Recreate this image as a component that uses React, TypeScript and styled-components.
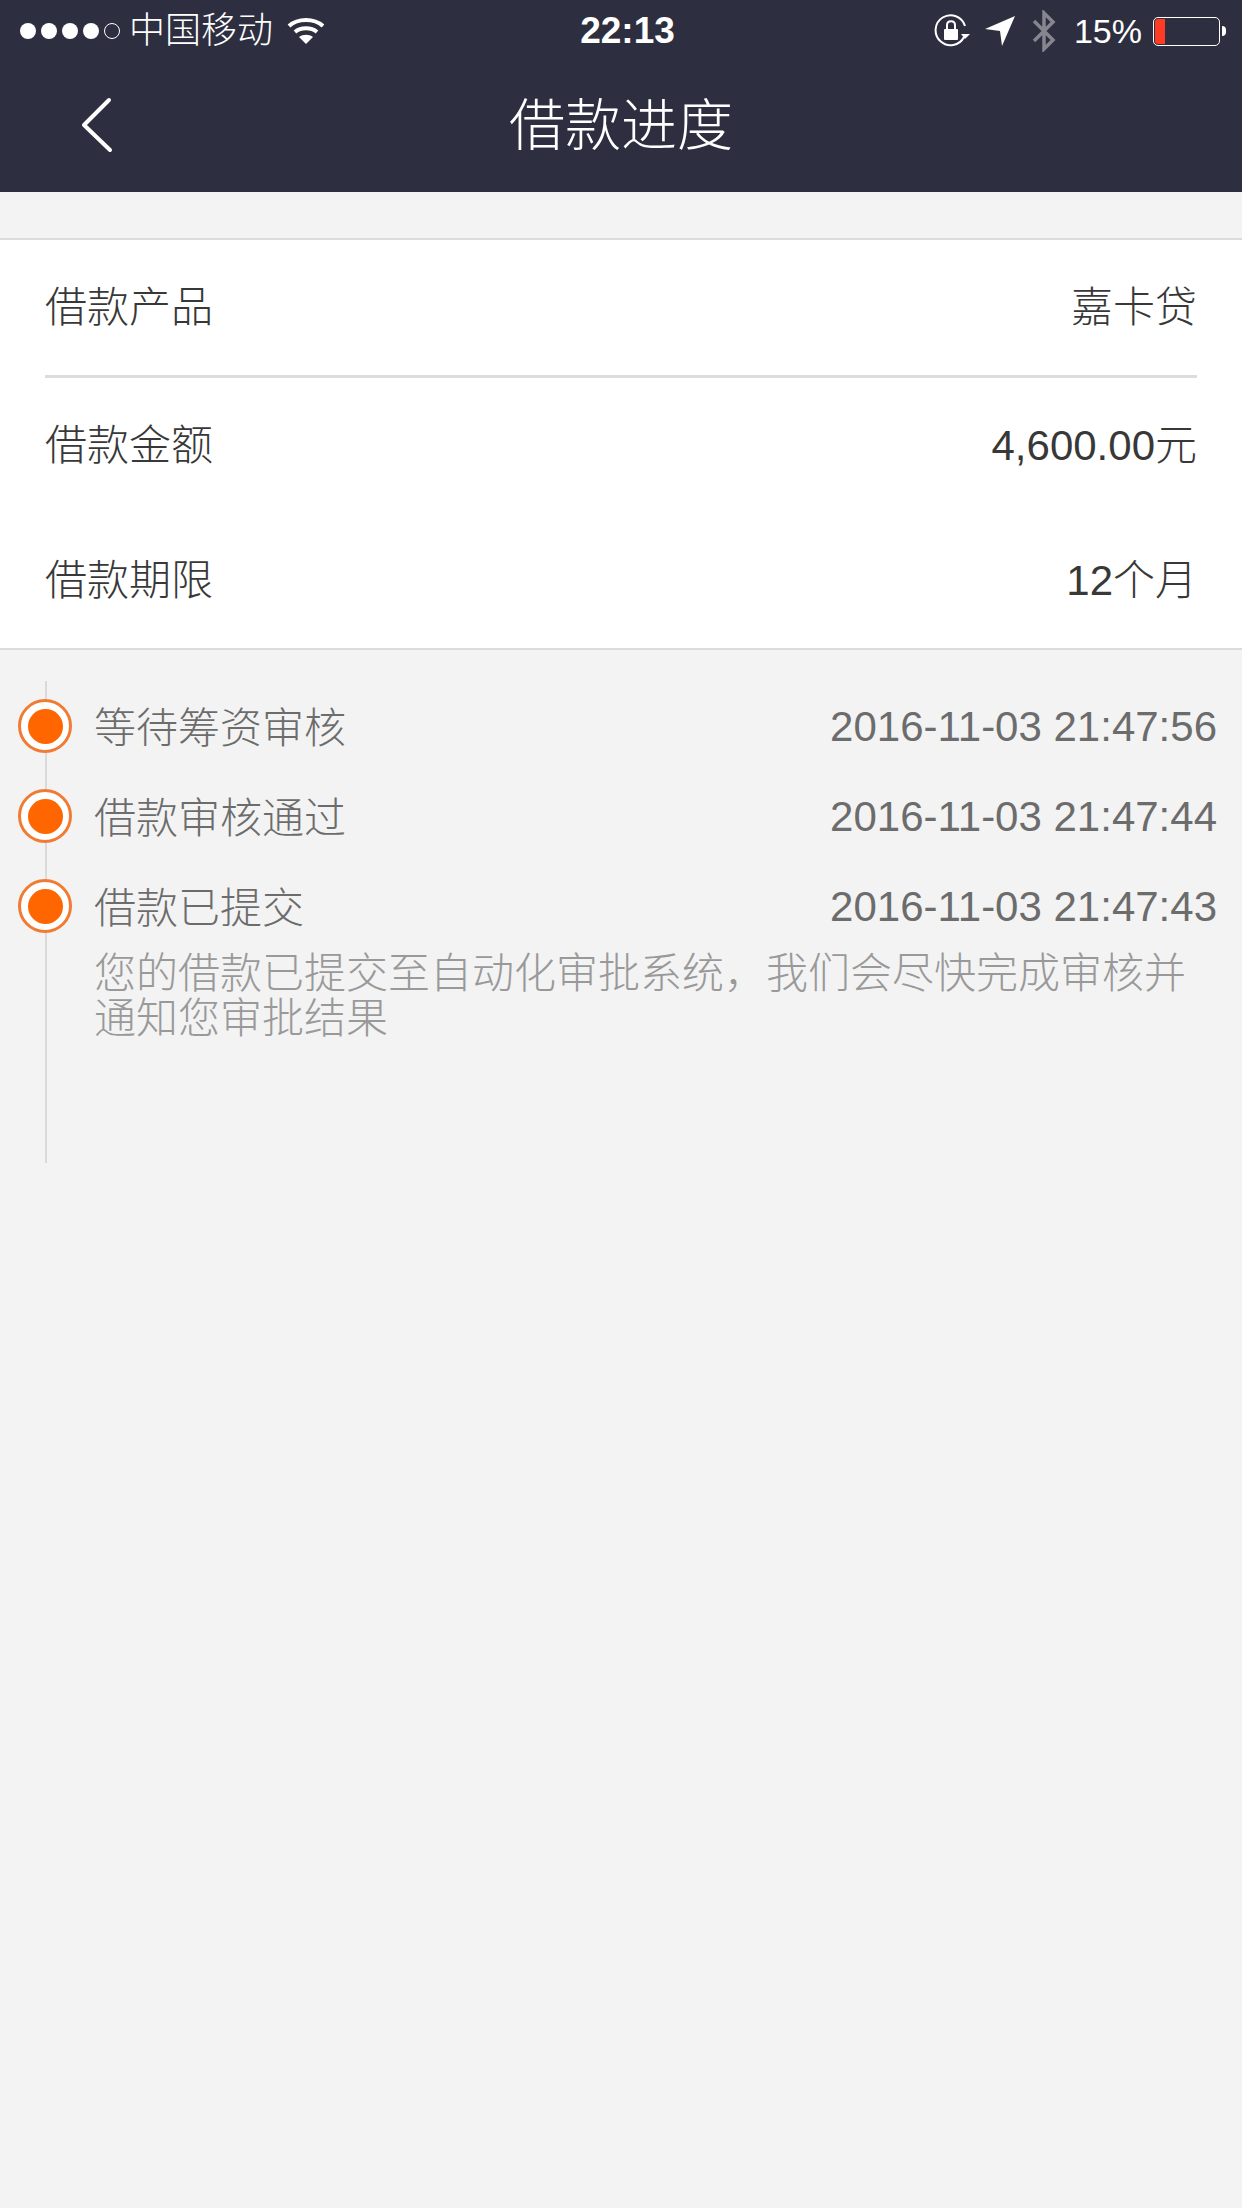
import styled, { createGlobalStyle } from 'styled-components';

const GlobalStyle = createGlobalStyle`
  html, body {
    margin: 0;
    padding: 0;
    background: #f3f3f3;
  }
  * {
    box-sizing: border-box;
  }
`;

const FONT = `"Liberation Sans", "Noto Sans CJK SC", sans-serif`;

const Page = styled.div`
  width: 1242px;
  height: 2208px;
  overflow: hidden;
  background: #f3f3f3;
  font-family: ${FONT};
`;

const Header = styled.header`
  height: 192px;
  background: #2d2f40;
  color: #ffffff;
`;

const StatusBar = styled.div`
  height: 60px;
  display: grid;
  grid-template-columns: 1fr auto 1fr;
  align-items: center;
  padding: 2px 16px 0 20px;
`;

const StatusLeft = styled.div`
  display: flex;
  align-items: center;
`;

const SignalDot = styled.span<{ $empty?: boolean }>`
  width: 16px;
  height: 16px;
  margin-right: 5px;
  border-radius: 50%;
  background: ${props => (props.$empty ? 'transparent' : '#ffffff')};
  border: ${props => (props.$empty ? '1px solid #ffffff' : 'none')};
`;

const Carrier = styled.span`
  margin-left: 4px;
  margin-right: 14px;
  font-size: 36px;
  font-weight: 300;
  line-height: 58px;
`;

const Clock = styled.span`
  font-size: 37px;
  font-weight: 700;
  margin-left: 9px;
`;

const StatusRight = styled.div`
  display: flex;
  align-items: center;
  justify-content: flex-end;
`;

const Percent = styled.span`
  margin: 0 11px 0 18px;
  font-size: 34px;
`;

const Battery = styled.span`
  width: 67px;
  height: 29px;
  border: 1px solid #ffffff;
  border-radius: 5px;
  padding: 1px;
  display: flex;
`;

const BatteryLevel = styled.span`
  width: 10px;
  background: #ff3b24;
  border-radius: 3px 0 0 3px;
`;

const BatteryNub = styled.span`
  width: 4px;
  height: 10px;
  margin-left: 2px;
  background: #ffffff;
  border-radius: 0 4px 4px 0;
`;

const NavBar = styled.div`
  position: relative;
  height: 132px;
  display: flex;
  align-items: center;
  justify-content: center;
`;

const BackButton = styled.button`
  position: absolute;
  left: 78px;
  top: 35px;
  width: 38px;
  height: 60px;
  padding: 0;
  border: none;
  background: none;
`;

const Title = styled.h1`
  margin: 0;
  font-size: 56px;
  font-weight: 300;
  color: #ffffff;
  line-height: 64px;
`;

const Card = styled.section`
  margin-top: 46px;
  background: #ffffff;
  border-top: 2px solid #dcdcdc;
  border-bottom: 2px solid #dcdcdc;
`;

const InfoRow = styled.div<{ $divided?: boolean }>`
  height: ${props => (props.$divided ? '138px' : '135px')};
  margin: 0 45px;
  padding-bottom: 8px;
  display: flex;
  align-items: center;
  justify-content: space-between;
  font-size: 42px;
  font-weight: 300;
  color: #383838;
  border-bottom: ${props => (props.$divided ? '3px solid #dcdcdc' : 'none')};
`;

const Timeline = styled.section`
  position: relative;
  margin-top: 31px;
  height: 482px;
`;

const TimelineRail = styled.div`
  position: absolute;
  left: 45px;
  top: 0;
  bottom: 0;
  width: 2px;
  background: #dadada;
`;

const Step = styled.div`
  position: relative;
  padding: 0 25px 0 94px;
  min-height: 90px;
`;

const StepHead = styled.div`
  height: 90px;
  padding-bottom: 3px;
  display: flex;
  align-items: center;
  justify-content: space-between;
  font-size: 42px;
  font-weight: 300;
  color: #6c6c6c;
`;

const StepTime = styled.span`
  padding-top: 5px;
`;

const StepDot = styled.span`
  position: absolute;
  left: 18px;
  top: 18px;
  width: 54px;
  height: 54px;
  border-radius: 50%;
  border: 3px solid #f07c34;
  background: #ffffff;
  display: flex;
  align-items: center;
  justify-content: center;

  &::after {
    content: '';
    width: 35px;
    height: 35px;
    border-radius: 50%;
    background: #ff6600;
  }
`;

const StepNote = styled.p`
  margin: 0;
  width: 1100px;
  font-size: 42px;
  font-weight: 300;
  line-height: 45px;
  color: #999999;
`;

const steps = [
  { title: '等待筹资审核', time: '2016-11-03 21:47:56' },
  { title: '借款审核通过', time: '2016-11-03 21:47:44' },
  {
    title: '借款已提交',
    time: '2016-11-03 21:47:43',
    note: '您的借款已提交至自动化审批系统，我们会尽快完成审核并通知您审批结果',
  },
];

const App = () => (
  <Page>
    <GlobalStyle />
    <Header>
      <StatusBar>
        <StatusLeft>
          <SignalDot />
          <SignalDot />
          <SignalDot />
          <SignalDot />
          <SignalDot $empty />
          <Carrier>中国移动</Carrier>
          <svg width="38" height="28" viewBox="0 0 38 28" fill="none" stroke="#fff" strokeWidth="4">
            <path d="M2 9C11 1 27 1 36 9" />
            <path d="M8 15C14 10 24 10 30 15" />
            <path d="M19 27L12 20C16 17 22 17 26 20Z" fill="#fff" stroke="none" />
          </svg>
        </StatusLeft>
        <Clock>22:13</Clock>
        <StatusRight>
          <svg width="36" height="36" viewBox="0 0 36 36" fill="none">
            <path d="M30 24A15 15 0 1 1 31 13" stroke="#fff" strokeWidth="2" />
            <path d="M27 21H36L31 26Z" fill="#fff" />
            <rect x="10" y="16" width="14" height="11" rx="1" fill="#fff" />
            <path d="M13 16V12C13 7 21 7 21 12V16" stroke="#fff" strokeWidth="2" />
          </svg>
          <svg width="30" height="30" viewBox="0 0 30 30" style={{ marginLeft: 15 }}>
            <path d="M0 13L30 0L17 30L15 15Z" fill="#fff" />
          </svg>
          <svg width="24" height="42" viewBox="0 0 24 42" fill="none" stroke="#85868f" strokeWidth="3.5" style={{ marginLeft: 17 }}>
            <path d="M2 11L21 30L12 39V3L21 12L2 31" />
          </svg>
          <Percent>15%</Percent>
          <Battery>
            <BatteryLevel />
          </Battery>
          <BatteryNub />
        </StatusRight>
      </StatusBar>
      <NavBar>
        <BackButton aria-label="返回">
          <svg width="38" height="60" viewBox="0 0 38 60" fill="none" stroke="#fff" strokeWidth="4" strokeLinecap="round" strokeLinejoin="round">
            <path d="M31 5L6 30L32 55" />
          </svg>
        </BackButton>
        <Title>借款进度</Title>
      </NavBar>
    </Header>

    <Card>
      <InfoRow $divided>
        <span>借款产品</span>
        <span>嘉卡贷</span>
      </InfoRow>
      <InfoRow>
        <span>借款金额</span>
        <span>4,600.00元</span>
      </InfoRow>
      <InfoRow>
        <span>借款期限</span>
        <span>12个月</span>
      </InfoRow>
    </Card>

    <Timeline>
      <TimelineRail />
      {steps.map(step => (
        <Step key={step.time}>
          <StepDot />
          <StepHead>
            <span>{step.title}</span>
            <StepTime>{step.time}</StepTime>
          </StepHead>
          {step.note && <StepNote>{step.note}</StepNote>}
        </Step>
      ))}
    </Timeline>
  </Page>
);

export default App;
